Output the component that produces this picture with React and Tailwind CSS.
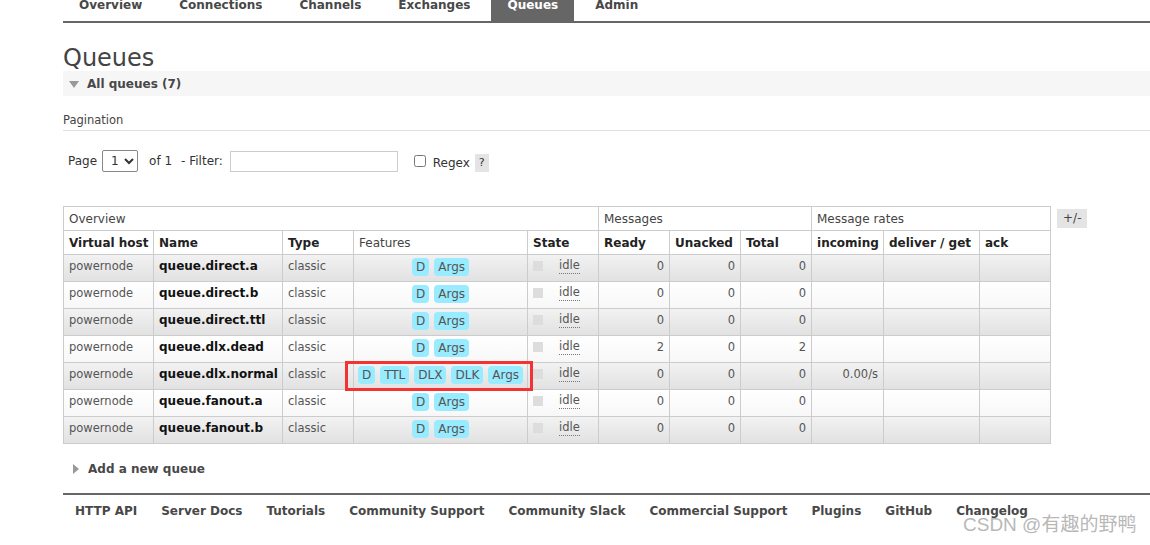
import { useState } from 'react'

const navItems = ['Overview', 'Connections', 'Channels', 'Exchanges', 'Queues', 'Admin']

const queues = [
  { name: 'queue.direct.a', features: ['D', 'Args'], ready: 0, unacked: 0, total: 0 },
  { name: 'queue.direct.b', features: ['D', 'Args'], ready: 0, unacked: 0, total: 0 },
  { name: 'queue.direct.ttl', features: ['D', 'Args'], ready: 0, unacked: 0, total: 0 },
  { name: 'queue.dlx.dead', features: ['D', 'Args'], ready: 2, unacked: 0, total: 2 },
  { name: 'queue.dlx.normal', features: ['D', 'TTL', 'DLX', 'DLK', 'Args'], ready: 0, unacked: 0, total: 0, incoming: '0.00/s', marked: true },
  { name: 'queue.fanout.a', features: ['D', 'Args'], ready: 0, unacked: 0, total: 0 },
  { name: 'queue.fanout.b', features: ['D', 'Args'], ready: 0, unacked: 0, total: 0 },
]

const footerLinks = ['HTTP API', 'Server Docs', 'Tutorials', 'Community Support', 'Community Slack', 'Commercial Support', 'Plugins', 'GitHub', 'Changelog']

function Badge({ label }) {
  return (
    <span className="inline-block h-[18px] leading-[18px] px-[4px] rounded-[4px] bg-[#99ebff] text-[#555] text-[12px]">
      {label}
    </span>
  )
}

export default function App() {
  const [page, setPage] = useState('1')
  const [filter, setFilter] = useState('')

  const cell = 'border border-[#cccccc] align-top px-[5px] pt-[3px] whitespace-nowrap'
  const head = 'border border-[#cccccc] text-left px-[5px] h-[24px] align-middle whitespace-nowrap'

  return (
    <div className="relative w-[1150px] h-[545px] overflow-hidden bg-white text-[#444] font-['DejaVu_Sans',sans-serif]">
      <div className="pl-[63px]">
        {/* top nav */}
        <div className="flex border-b-2 border-[#666] -mt-[10px]">
          {navItems.map(item => (
            <div
              key={item}
              className={`px-[16px] mr-[5px] pt-[7px] pb-[8px] text-[12px] leading-[16px] font-bold ${item === 'Queues' ? 'bg-[#666] text-white' : 'text-[#484848]'}`}
            >
              {item}
            </div>
          ))}
        </div>

        <h1 className="mt-[20px] text-[24px] leading-[30px] text-[#444] font-normal">Queues</h1>

        <div className="mt-[-2px] h-[25px] bg-[#f6f6f6] flex items-center pl-[6px] gap-[8px]">
          <span className="w-0 h-0 border-l-[5px] border-r-[5px] border-t-[7px] border-l-transparent border-r-transparent border-t-[#999] mt-[1px]"></span>
          <span className="text-[12px] font-bold text-[#484848]">All queues (7)</span>
        </div>

        <div className="mt-[17px] text-[11.5px] text-[#444] leading-[14px] pb-[3px] border-b border-[#e0e0e0]">Pagination</div>

        {/* pagination controls */}
        <div className="mt-[19px] flex items-center pl-[5px] text-[12px] text-[#333] h-[22px]">
          <span>Page</span>
          <select
            value={page}
            onChange={e => setPage(e.target.value)}
            className="ml-[5px] h-[22px] w-[36px] border border-[#888] rounded-[2px] text-[12px] pl-[4px] bg-white"
          >
            <option value="1">1</option>
          </select>
          <span className="ml-[11px]">of 1</span>
          <span className="ml-[9px]">- Filter:</span>
          <input
            value={filter}
            onChange={e => setFilter(e.target.value)}
            className="ml-[7px] w-[168px] h-[21px] border border-[#ccc] bg-white"
          />
          <input type="checkbox" className="ml-[16px] w-[12px] h-[12px]" />
          <span className="ml-[7px] mt-[4px]">Regex</span>
          <span className="ml-[5px] mt-[4px] bg-[#e4e4e4] px-[4px] h-[18px] leading-[18px] text-[11px]">?</span>
        </div>

        {/* table */}
        <div className="mt-[34px] flex items-start gap-[6px]">
          <table className="table-fixed w-[987px] border-collapse text-[11.5px] leading-[16px]">
            <colgroup>
              <col className="w-[90px]" />
              <col className="w-[129px]" />
              <col className="w-[71px]" />
              <col className="w-[174px]" />
              <col className="w-[71px]" />
              <col className="w-[71px]" />
              <col className="w-[71px]" />
              <col className="w-[71px]" />
              <col className="w-[72px]" />
              <col className="w-[96px]" />
              <col className="w-[71px]" />
            </colgroup>
            <thead>
              <tr className="bg-white text-[#444]">
                <th colSpan={5} className={`${head} font-normal h-[23px] text-[12px]`}>Overview</th>
                <th colSpan={3} className={`${head} font-normal h-[23px] text-[12px]`}>Messages</th>
                <th colSpan={3} className={`${head} font-normal h-[23px] text-[12px]`}>Message rates</th>
              </tr>
              <tr className="bg-white text-[#222] text-[12px]">
                <th className={head}>Virtual host</th>
                <th className={head}>Name</th>
                <th className={head}>Type</th>
                <th className={`${head} font-normal text-[#444]`}>Features</th>
                <th className={head}>State</th>
                <th className={head}>Ready</th>
                <th className={head}>Unacked</th>
                <th className={head}>Total</th>
                <th className={head}>incoming</th>
                <th className={head}>deliver / get</th>
                <th className={head}>ack</th>
              </tr>
            </thead>
            <tbody>
              {queues.map((q, index) => (
                <tr
                  key={q.name}
                  className={`h-[27px] ${index % 2 === 0 ? 'bg-gradient-to-b from-[#f2f2f2] to-[#e1e1e1]' : 'bg-gradient-to-b from-white to-[#f7f7f7]'}`}
                >
                  <td className={`${cell} text-[#555]`}>powernode</td>
                  <td className={`${cell} font-bold text-[#111] text-[12px]`}>{q.name}</td>
                  <td className={`${cell} text-[#555]`}>classic</td>
                  <td className={`${cell} relative text-center pt-[2px]`}>
                    <div className="flex justify-center gap-[5px]">
                      {q.features.map(f => <Badge key={f} label={f} />)}
                    </div>
                    {q.marked && (
                      <div className="absolute left-[-9px] top-[-2px] w-[188px] h-[30px] border-[3px] border-[#f33333]"></div>
                    )}
                  </td>
                  <td className={`${cell} text-[#555]`}>
                    <div className="flex items-start">
                      <span className="mt-[3px] w-[10px] h-[10px] bg-[#dddddd]"></span>
                      <span className="ml-[16px] border-b border-dotted border-[#777] leading-[15px]">idle</span>
                    </div>
                  </td>
                  <td className={`${cell} text-right text-[#555]`}>{q.ready}</td>
                  <td className={`${cell} text-right text-[#555]`}>{q.unacked}</td>
                  <td className={`${cell} text-right text-[#555]`}>{q.total}</td>
                  <td className={`${cell} text-right text-[#555]`}>{q.incoming || ''}</td>
                  <td className={cell}></td>
                  <td className={cell}></td>
                </tr>
              ))}
            </tbody>
          </table>
          <span className="mt-[3px] bg-[#e4e4e4] px-[6px] h-[19px] leading-[19px] text-[12px] text-[#444]">+/-</span>
        </div>

        <div className="mt-[16px] flex items-center pl-[10px] gap-[9px]">
          <span className="w-0 h-0 border-t-[5px] border-b-[5px] border-l-[6px] border-t-transparent border-b-transparent border-l-[#999]"></span>
          <span className="text-[12px] font-bold text-[#484848]">Add a new queue</span>
        </div>

        {/* footer */}
        <div className="mt-[15px] border-t-2 border-[#666] flex pl-[12px] pt-[7px] gap-[24px] text-[12px] font-bold text-[#484848]">
          {footerLinks.map(link => (
            <span key={link}>{link}</span>
          ))}
        </div>
      </div>

      <div className="absolute left-[963px] top-[514px] text-[19px] leading-[22px] text-[#b8b8b8] font-['Liberation_Sans','Noto_Sans_CJK_SC',sans-serif]">
        CSDN @有趣的野鸭
      </div>
    </div>
  )
}
